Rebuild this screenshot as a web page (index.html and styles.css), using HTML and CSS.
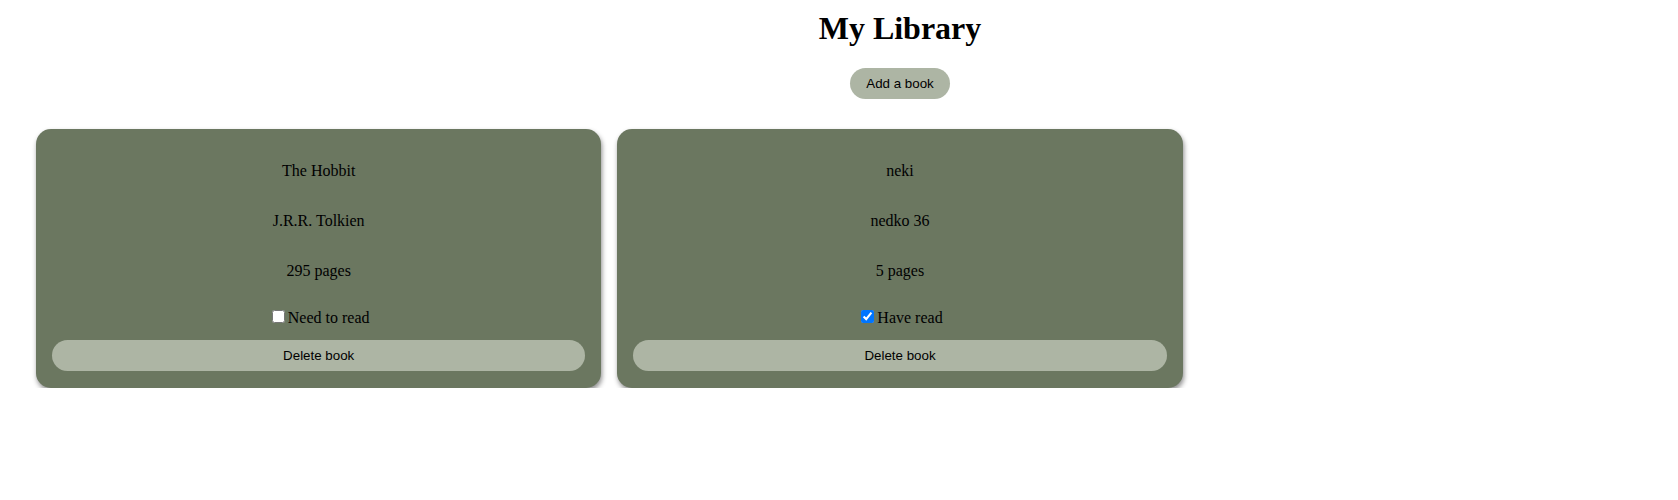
FILE: index.html
```html
<!DOCTYPE html>
<html lang="en">
<head>
<meta charset="utf-8">
<title>My Library</title>
<link rel="stylesheet" href="styles.css">
</head>
<body>
<div class="page">
  <header class="header">
    <h1 class="title">My Library</h1>
    <button class="add-btn">Add a book</button>
  </header>
  <main class="library">
    <div class="card">
      <p class="field">The Hobbit</p>
      <p class="field">J.R.R. Tolkien</p>
      <p class="field">295 pages</p>
      <label class="read-row"><input type="checkbox">Need to read</label>
      <button class="delete-btn">Delete book</button>
    </div>
    <div class="card">
      <p class="field">neki</p>
      <p class="field">nedko 36</p>
      <p class="field">5 pages</p>
      <label class="read-row"><input type="checkbox" checked>Have read</label>
      <button class="delete-btn">Delete book</button>
    </div>
  </main>
</div>
</body>
</html>
```

FILE: styles.css
```css
body {
  margin: 0;
  font-family: "Liberation Serif", "Times New Roman", serif;
  font-size: 16px;
  color: #000;
  background: #fff;
}

.page {
  padding: 0 36px;
}

.header {
  display: flex;
  flex-direction: column;
  align-items: center;
  padding-top: 10px;
  padding-left: 122px;
}

.title {
  margin: 0;
  font-size: 32px;
  font-weight: bold;
  line-height: 37px;
}

.add-btn {
  margin-top: 21px;
  height: 31px;
  padding: 0 16px;
  border: none;
  border-radius: 16px;
  background: #adb5a4;
  font-family: "Liberation Sans", Arial, sans-serif;
  font-size: 13.333px;
  color: #000;
}

.library {
  display: grid;
  grid-template-columns: repeat(2, 565.33px);
  gap: 16px;
  margin-top: 30px;
}

.card {
  display: flex;
  flex-direction: column;
  align-items: stretch;
  padding: 17px 16px 17px;
  background: #6b7760;
  border-radius: 15px;
  box-shadow: 1px 3px 5px rgba(0, 0, 0, 0.45);
  text-align: center;
}

.field {
  margin: 16px 0;
  line-height: 18px;
}

.read-row {
  display: block;
  margin-top: 11px;
  line-height: 20px;
}

.read-row input {
  margin: 3px 3px 3px 4px;
}

.delete-btn {
  margin-top: 12px;
  height: 31px;
  border: none;
  border-radius: 16px;
  background: #adb5a4;
  font-family: "Liberation Sans", Arial, sans-serif;
  font-size: 13.333px;
  color: #000;
}
```
